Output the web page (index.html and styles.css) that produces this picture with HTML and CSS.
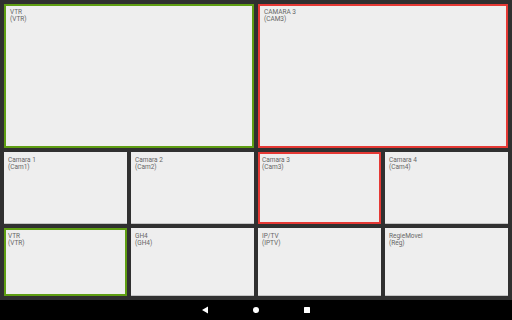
FILE: index.html
```html
<!DOCTYPE html>
<html lang="en">

<head>
    <meta charset="UTF-8" />
    <meta name="viewport" content="width=device-width, initial-scale=1.0" />
    <title>Multiview</title>
    <link rel="stylesheet" href="styles.css">
</head>

<body>

    <div class="screen">
        <div class="grid">
            <div class="tile big preview">
                <span>VTR</span>
                <span>(VTR)</span>
            </div>
            <div class="tile big program">
                <span>CAMARA 3</span>
                <span>(CAM3)</span>
            </div>

            <div class="tile">
                <span>Camara 1</span>
                <span>(Cam1)</span>
            </div>
            <div class="tile">
                <span>Camara 2</span>
                <span>(Cam2)</span>
            </div>
            <div class="tile program">
                <span>Camara 3</span>
                <span>(Cam3)</span>
            </div>
            <div class="tile">
                <span>Camara 4</span>
                <span>(Cam4)</span>
            </div>

            <div class="tile preview">
                <span>VTR</span>
                <span>(VTR)</span>
            </div>
            <div class="tile">
                <span>GH4</span>
                <span>(GH4)</span>
            </div>
            <div class="tile">
                <span>IP/TV</span>
                <span>(IPTV)</span>
            </div>
            <div class="tile">
                <span>RegieMovel</span>
                <span>(Reg)</span>
            </div>
        </div>

        <div class="navbar">
            <svg class="nav-icon" width="8" height="8" viewBox="0 0 8 8">
                <polygon points="7,0.5 7,7.5 1,4" fill="#fff" />
            </svg>
            <svg class="nav-icon" width="8" height="8" viewBox="0 0 8 8">
                <circle cx="4" cy="4" r="3" fill="#fff" />
            </svg>
            <svg class="nav-icon" width="8" height="8" viewBox="0 0 8 8">
                <rect x="1" y="1" width="6" height="6" rx="0.5" fill="#fff" />
            </svg>
        </div>
    </div>

</body>

</html>
```

FILE: styles.css
```css
* {
    box-sizing: border-box;
}

body {
    font-family: Roboto, 'Liberation Sans', sans-serif;
    background-color: #303030;
    margin: 0;
    padding: 0;
}

.screen {
    width: 512px;
    height: 320px;
    display: flex;
    flex-direction: column;
}

.grid {
    height: 300px;
    padding: 4px;
    display: grid;
    grid-template-columns: repeat(4, 1fr);
    grid-template-rows: 72px 68px 72px 1fr;
    gap: 4px;
}

.tile {
    background-color: #eeeeee;
    border-bottom: 1px solid #c4c4c4;
    padding: 5px 4px;
    display: flex;
    flex-direction: column;
    font-size: 6.5px;
    line-height: 7px;
    color: #666;
}

.tile.big {
    grid-column: span 2;
    grid-row: span 2;
}

.tile.preview {
    border: 2px solid #5f9e13;
    padding: 3px 2px;
}

.tile.program {
    border: 2px solid #e53935;
    padding: 3px 2px;
}

.tile.big span {
    padding-left: 2px;
}

.navbar {
    flex: 1;
    background-color: #000;
    display: flex;
    justify-content: center;
    align-items: center;
    gap: 43px;
}
```
